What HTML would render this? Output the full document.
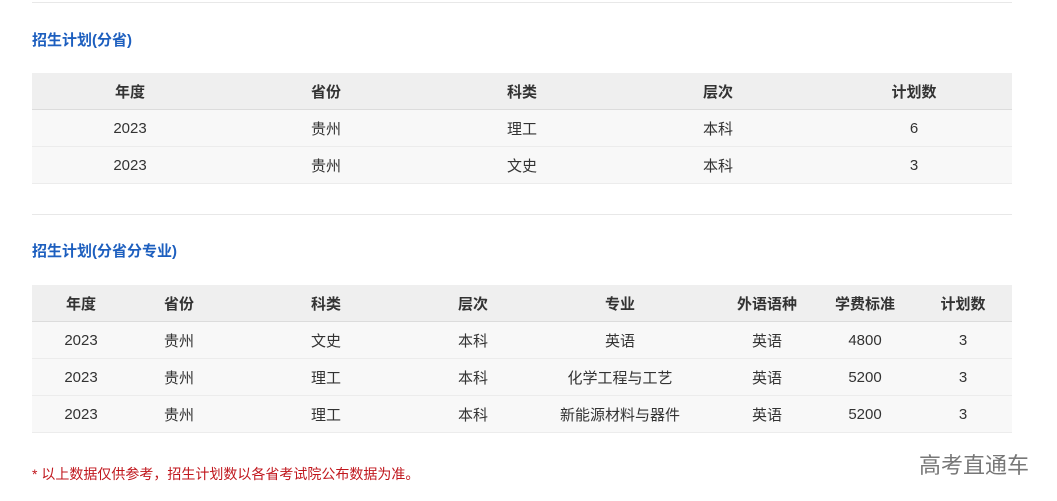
<!DOCTYPE html>
<html><head><meta charset="utf-8"><style>
body{margin:0;width:1057px;height:501px;background:#fff;font-family:"Liberation Sans","Noto Sans CJK SC",sans-serif;position:relative;overflow:hidden}
.line{position:absolute;left:32px;width:980px;height:1px;background:#e8e8e8}
.t{position:absolute;left:32px;color:#1d5fbf;font-weight:bold;font-size:15px;line-height:20px}
table{position:absolute;left:32px;width:980px;border-collapse:collapse;table-layout:fixed;font-size:15px;color:#333}
th{background:#efefef;height:36px;font-weight:bold;border-bottom:1px solid #dcdcdc;padding:0}
td{background:#f8f8f8;height:36px;border-bottom:1px solid #ececec;text-align:center;padding:0}
.n{position:absolute;left:32px;top:464px;color:#c0161c;font-size:14px}
.w{position:absolute;left:919px;top:448px;color:#777;font-size:22px}
</style></head><body>
<div class="line" style="top:2px"></div>
<div class="t" style="top:31px">招生计划(分省)</div>
<table style="top:73px"><tr><th>年度</th><th>省份</th><th>科类</th><th>层次</th><th>计划数</th></tr>
<tr><td>2023</td><td>贵州</td><td>理工</td><td>本科</td><td>6</td></tr>
<tr><td>2023</td><td>贵州</td><td>文史</td><td>本科</td><td>3</td></tr></table>
<div class="line" style="top:214px"></div>
<div class="t" style="top:242px">招生计划(分省分专业)</div>
<table style="top:285px"><colgroup><col style="width:98px"><col style="width:98px"><col style="width:196px"><col style="width:98px"><col style="width:196px"><col style="width:98px"><col style="width:98px"><col style="width:98px"></colgroup>
<tr><th>年度</th><th>省份</th><th>科类</th><th>层次</th><th>专业</th><th>外语语种</th><th>学费标准</th><th>计划数</th></tr>
<tr><td>2023</td><td>贵州</td><td>文史</td><td>本科</td><td>英语</td><td>英语</td><td>4800</td><td>3</td></tr>
<tr><td>2023</td><td>贵州</td><td>理工</td><td>本科</td><td>化学工程与工艺</td><td>英语</td><td>5200</td><td>3</td></tr>
<tr><td>2023</td><td>贵州</td><td>理工</td><td>本科</td><td>新能源材料与器件</td><td>英语</td><td>5200</td><td>3</td></tr></table>
<div class="n">* 以上数据仅供参考，招生计划数以各省考试院公布数据为准。</div>
<div class="w">高考直通车</div>
</body></html>
